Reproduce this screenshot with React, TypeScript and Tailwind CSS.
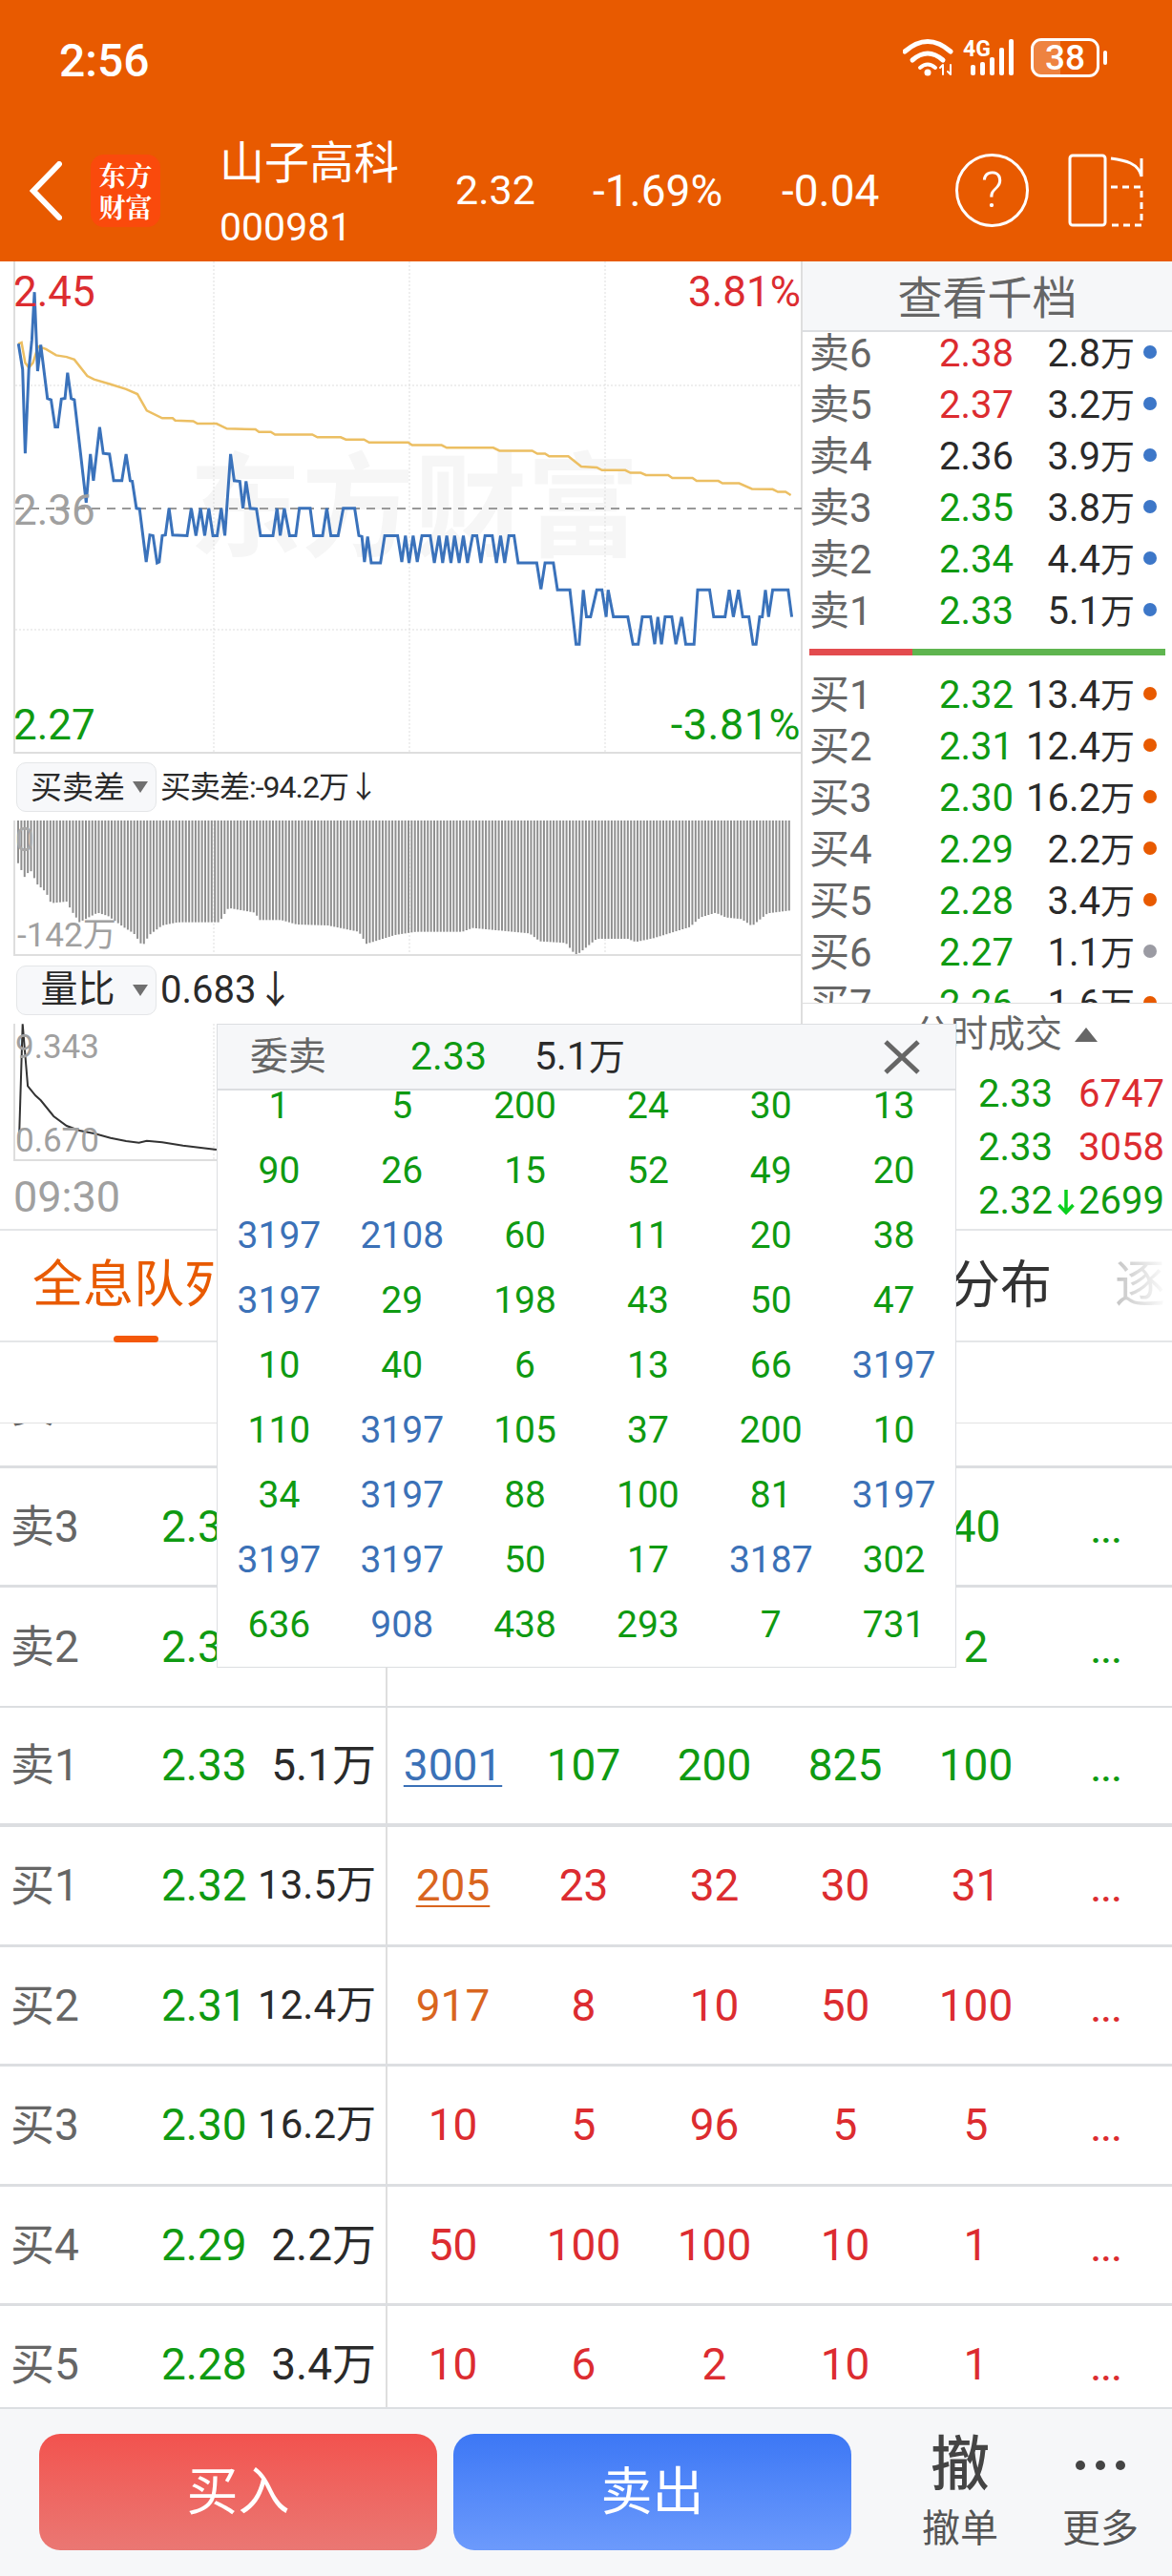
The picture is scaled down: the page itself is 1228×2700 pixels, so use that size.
import React from "react";

const GREEN = "text-[#0f9a12]";
const RED = "text-[#dc2c30]";
const BLUE = "text-[#3b71b7]";

type Pt = [number, number];

// chart points were read off the reference crops, so they get scaled back to px here
const pricePts: Pt[] = [
  [32,262],[40,340],[45,595],[52,340],[58,250],[63,105],[69,345],[75,265],[88,428],[95,432],[103,515],[108,515],[115,430],[122,428],[127,350],[134,428],[140,432],[152,595],[163,745],[171,597],[177,678],[189,515],[196,595],[208,597],[216,678],[232,678],[240,597],[248,678],[252,680],[260,762],[266,764],[279,925],[286,843],[292,845],[300,928],[304,925],[310,845],[316,843],[323,762],[330,843],[358,845],[366,762],[375,845],[384,762],[392,845],[400,762],[408,845],[416,845],[424,762],[431,845],[442,597],[449,678],[460,680],[466,762],[472,680],[480,762],[492,764],[500,845],[524,845],[532,762],[538,845],[546,762],[556,845],[568,845],[575,762],[596,762],[603,845],[620,845],[628,762],[636,845],[650,845],[660,762],[682,762],[690,845],[696,848],[701,925],[707,848],[714,928],[732,928],[740,845],[765,845],[773,925],[780,845],[787,928],[795,845],[803,925],[812,845],[828,845],[836,928],[845,845],[852,928],[860,845],[868,928],[875,845],[884,928],[892,845],[900,928],[910,845],[918,845],[926,928],[934,845],[948,845],[956,928],[964,845],[972,928],[980,845],[990,845],[998,928],[1034,928],[1042,1008],[1050,928],[1066,928],[1074,1010],[1098,1010],[1110,1175],[1116,1175],[1124,1010],[1130,1092],[1138,1092],[1150,1010],[1160,1010],[1168,1092],[1172,1010],[1182,1092],[1210,1092],[1220,1175],[1230,1175],[1238,1092],[1254,1092],[1262,1175],[1268,1092],[1275,1175],[1282,1092],[1295,1092],[1303,1175],[1314,1092],[1322,1175],[1338,1175],[1345,1010],[1368,1010],[1376,1092],[1398,1092],[1406,1010],[1414,1092],[1424,1010],[1432,1092],[1444,1092],[1452,1175],[1458,1175],[1465,1092],[1470,1092],[1476,1010],[1482,1092],[1490,1010],[1520,1010],[1527,1092],
];

const avgPts: Pt[] = [
  [32,262],[38,258],[45,320],[52,335],[60,320],[70,270],[85,278],[105,297],[125,302],[140,310],[165,360],[178,370],[210,385],[240,400],[262,415],[280,465],[310,488],[330,488],[335,495],[370,497],[378,505],[415,505],[435,520],[490,522],[497,530],[520,530],[528,538],[600,538],[610,546],[655,546],[665,553],[700,553],[710,562],[785,562],[793,570],[850,570],[860,578],[950,578],[962,587],[1025,587],[1035,596],[1050,596],[1058,604],[1095,604],[1120,635],[1150,638],[1160,646],[1205,646],[1215,654],[1235,654],[1245,661],[1288,661],[1296,670],[1335,670],[1343,679],[1385,679],[1393,686],[1425,686],[1450,703],[1490,704],[1500,712],[1515,712],[1525,722],
];

const depthPts: Pt[] = [
  [33,380],[44,418],[55,395],[68,440],[85,465],[95,500],[125,495],[135,525],[150,560],[185,530],[205,540],[235,575],[255,595],[272,635],[285,600],[310,570],[340,560],[420,560],[438,515],[490,530],[497,553],[540,553],[570,567],[630,570],[690,590],[705,628],[760,600],[800,590],[890,590],[910,578],[1020,595],[1040,620],[1090,625],[1110,665],[1150,612],[1210,612],[1225,622],[1260,610],[1330,575],[1350,545],[1380,530],[1400,545],[1430,550],[1450,572],[1480,532],[1528,522],
];

const ratioPts: Pt[] = [
  [33,1255],[40,880],[50,1075],[65,1105],[75,1120],[100,1170],[125,1200],[150,1215],[180,1225],[210,1238],[240,1248],[265,1253],[280,1247],[310,1252],[350,1262],[415,1275],
];

function toPoints(pts: Pt[], sy: number, oy: number) {
  return pts.map(([x, y]) => `${(x / 1.845 - 14).toFixed(1)},${(y / sy - oy).toFixed(1)}`).join(" ");
}

function depthAt(x: number) {
  for (let i = 1; i < depthPts.length; i++) {
    const [x0, y0] = depthPts[i - 1];
    const [x1, y1] = depthPts[i];
    if (x <= x1) return y0 + ((y1 - y0) * (x - x0)) / (x1 - x0);
  }
  return depthPts[depthPts.length - 1][1];
}

function GridLines({ h }: { h: number }) {
  return (
    <>
      {[208, 413, 618].map((x) => (
        <line key={x} x1={x} y1={0} x2={x} y2={h} stroke="#dddddd" strokeWidth="1" strokeDasharray="2 2" />
      ))}
    </>
  );
}

function MainChart() {
  return (
    <div className="relative h-[516px] border-b-2 border-l-2 border-[#dedede]">
      <div className="absolute left-[182px] top-[200px] flex text-[118px] leading-[120px] font-bold text-[#f6f6f6]">
        <span>东</span>
        <span>方</span>
        <span>财</span>
        <span>富</span>
      </div>
      <svg className="absolute left-0 top-0" width="824" height="514">
        <GridLines h={514} />
        <line x1="0" y1="130" x2="824" y2="130" stroke="#dddddd" strokeDasharray="2 2" />
        <line x1="0" y1="386" x2="824" y2="386" stroke="#dddddd" strokeDasharray="2 2" />
        <line x1="0" y1="259" x2="824" y2="259" stroke="#999" strokeWidth="2" strokeDasharray="9 7" />
        <polyline points={toPoints(avgPts, 2.9, 4)} fill="none" stroke="#ecbf63" strokeWidth="2.5" />
        <polyline points={toPoints(pricePts, 2.9, 4)} fill="none" stroke="#3a72bb" strokeWidth="3" />
      </svg>
      <div className={`absolute -left-[2px] top-[8px] text-[44px] leading-[48px] ${RED}`}>2.45</div>
      <div className={`absolute right-0 top-[8px] text-[44px] leading-[48px] ${RED}`}>3.81%</div>
      <div className="absolute -left-[2px] top-[237px] text-[44px] leading-[48px] text-[#a0a0a0]">2.36</div>
      <div className={`absolute bottom-[4px] -left-[2px] text-[44px] leading-[48px] ${GREEN}`}>2.27</div>
      <div className={`absolute bottom-[4px] right-0 text-[45px] leading-[48px] tracking-[0.5px] ${GREEN}`}>-3.81%</div>
    </div>
  );
}

function DepthChart() {
  const bars = Array.from({ length: 240 }, (_, i) => {
    const x = 3 + i * 3.38;
    const y = depthAt((x + 14) * 1.845) / 3 - 80;
    return { x, y };
  });
  return (
    <div className="relative h-[142px] border-b-2 border-l-2 border-[#dedede]">
      <svg className="absolute left-0 top-0" width="824" height="140">
        <GridLines h={140} />
        {bars.map((b) => (
          <line key={b.x} x1={b.x} y1={0} x2={b.x} y2={b.y} stroke="#8f8f8f" strokeWidth="2" />
        ))}
      </svg>
      <div className="absolute left-0 top-[2px] text-[35px] leading-[38px] text-[#a8a8a8]">0</div>
      <div className="absolute left-[2px] top-[102px] text-[35px] leading-[38px] text-[#a0a0a0]">-142万</div>
    </div>
  );
}

function RatioChart() {
  return (
    <div className="relative h-[144px] border-b-2 border-l-2 border-[#dedede]">
      <svg className="absolute left-0 top-0" width="824" height="142">
        <GridLines h={142} />
        <polyline points={toPoints(ratioPts, 3, 293)} fill="none" stroke="#333" strokeWidth="2" />
      </svg>
      <div className="absolute left-0 top-[6px] text-[35px] leading-[38px] text-[#a0a0a0]">9.343</div>
      <div className="absolute left-0 top-[104px] text-[35px] leading-[38px] text-[#a0a0a0]">0.670</div>
    </div>
  );
}

function Pill({ label, size }: { label: string; size: string }) {
  return (
    <div className="flex h-[52px] w-[147px] items-center justify-between rounded-[10px] border border-[#e4e6e8] bg-[#f7f8fa] pl-[9px] pr-[8px]">
      <span className={`flex-1 text-center leading-none text-[#2a2a2a] ${size}`}>{label}</span>
      <span className="ml-[3px] h-0 w-0 border-x-[8px] border-t-[12px] border-x-transparent border-t-[#707070]" />
    </div>
  );
}

const asks = [
  ["卖6", "2.38", "2.8", RED],
  ["卖5", "2.37", "3.2", RED],
  ["卖4", "2.36", "3.9", "text-[#2a2a2a]"],
  ["卖3", "2.35", "3.8", GREEN],
  ["卖2", "2.34", "4.4", GREEN],
  ["卖1", "2.33", "5.1", GREEN],
];

const bids = [
  ["买1", "2.32", "13.4", "bg-[#e85a00]"],
  ["买2", "2.31", "12.4", "bg-[#e85a00]"],
  ["买3", "2.30", "16.2", "bg-[#e85a00]"],
  ["买4", "2.29", "2.2", "bg-[#e85a00]"],
  ["买5", "2.28", "3.4", "bg-[#e85a00]"],
  ["买6", "2.27", "1.1", "bg-[#9b9ba3]"],
  ["买7", "2.26", "1.6", "bg-[#e85a00]"],
];

function BookRow({ label, price, vol, priceCls, dotCls }: { label: string; price: string; vol: string; priceCls: string; dotCls: string }) {
  return (
    <div className="flex h-[54px] items-center pl-[7px] text-[40px] leading-none">
      <span className="w-[136px] text-[42px] text-[#666]">{label}</span>
      <span className={`w-[78px] ${priceCls}`}>{price}</span>
      <span className="flex-1 text-right text-[#2a2a2a]">
        {vol}
        <span className="text-[36px]">万</span>
      </span>
      <span className="ml-[9px] mr-[16px] mb-[4px] flex h-[14px] w-[14px]">
        <span className={`h-full w-full rounded-full ${dotCls}`} />
      </span>
    </div>
  );
}

function OrderBook() {
  return (
    <div className="flex h-[1014px] w-[389px] flex-col border-l-2 border-[#dedede]">
      <div className="flex h-[74px] shrink-0 items-center justify-center border-b-2 border-[#dcdee1] bg-[#f6f7f9] pt-[4px] text-[47px] leading-none text-[#666]">
        查看千档
      </div>
      <div className="h-[704px] shrink-0 overflow-hidden border-b border-[#dedede]">
        <div className="-mt-[4px]">
          {asks.map((r) => (
            <BookRow key={r[0]} label={r[0]} price={r[1]} vol={r[2]} priceCls={r[3]} dotCls="bg-[#3d77c8]" />
          ))}
          <div className="mx-[7px] mb-[15px] mt-[12px] flex h-[7px]">
            <div className="w-[108px] bg-[#e34b4e]" />
            <div className="flex-1 bg-[#5fb54f]" />
          </div>
          {bids.map((r) => (
            <BookRow key={r[0]} label={r[0]} price={r[1]} vol={r[2]} priceCls={GREEN} dotCls={r[3]} />
          ))}
        </div>
      </div>
      <div className="flex h-[64px] shrink-0 items-center justify-end pr-[78px] text-[39px] text-[#666]">
        分时成交
        <span className="ml-[13px] h-0 w-0 border-x-[12px] border-b-[15px] border-x-transparent border-b-[#666]" />
      </div>
      <div className="pl-[184px] pr-[8px] pt-[3px] text-[40px] leading-none">
        <div className="flex h-[56px] items-center justify-between">
          <span className={GREEN}>2.33</span>
          <span className={RED}>6747</span>
        </div>
        <div className="flex h-[56px] items-center justify-between">
          <span className={GREEN}>2.33</span>
          <span className={RED}>3058</span>
        </div>
        <div className="flex h-[56px] items-center justify-between">
          <span className={GREEN}>2.32</span>
          <svg width="18" height="30" viewBox="0 0 18 30" fill="none" stroke="#0ad01e" strokeWidth="3.5">
            <path d="M9 3V27M1.5 19L9 27L16.5 19" />
          </svg>
          <span className={GREEN}>2699</span>
        </div>
      </div>
    </div>
  );
}

const popupRows = [
  [1, 5, 200, 24, 30, 13],
  [90, 26, 15, 52, 49, 20],
  [3197, 2108, 60, 11, 20, 38],
  [3197, 29, 198, 43, 50, 47],
  [10, 40, 6, 13, 66, 3197],
  [110, 3197, 105, 37, 200, 10],
  [34, 3197, 88, 100, 81, 3197],
  [3197, 3197, 50, 17, 3187, 302],
  [636, 908, 438, 293, 7, 731],
];
const popupBlue = [3197, 2108, 3187, 908];

function QueuePopup() {
  return (
    <div className="absolute left-[227px] top-[1073px] h-[675px] w-[775px] overflow-hidden border border-[#dcdee1] bg-white">
      <div className="relative z-10 flex h-[69px] items-center border-b-2 border-[#dcdee1] bg-[#f6f7f9] pl-[34px] text-[41px]">
        <span className="w-[168px] text-[40px] text-[#666]">委卖</span>
        <span className={`w-[130px] ${GREEN}`}>2.33</span>
        <span className="flex-1 text-[#2a2a2a]">
          5.1<span className="text-[38px]">万</span>
        </span>
        <svg className="mr-[37px]" width="38" height="36" viewBox="0 0 38 36" fill="none" stroke="#666" strokeWidth="5">
          <path d="M2 2L36 34M36 2L2 34" />
        </svg>
      </div>
      <div className="-mt-[18px] grid grid-cols-6">
        {popupRows.flat().map((v, i) => (
          <div key={i} className={`flex h-[68px] items-center justify-center text-[39px] ${popupBlue.includes(v) ? BLUE : GREEN}`}>
            {v}
          </div>
        ))}
      </div>
    </div>
  );
}

type TableRow = {
  label: string;
  price: string;
  vol: string;
  volSize: string;
  cells: (string | number)[];
  side: string;
  line: string;
  firstCls?: string;
};

const tableRows: TableRow[] = [
  { label: "卖4", price: "", vol: "", volSize: "text-[46px]", cells: ["", "", "", "", "", ""], side: GREEN, line: "border-b-[3px]" },
  { label: "卖3", price: "2.35", vol: "", volSize: "text-[46px]", cells: ["", "", "", "", 40, "..."], side: GREEN, line: "border-b-[3px]" },
  { label: "卖2", price: "2.34", vol: "", volSize: "text-[46px]", cells: ["", "", "", "", 2, "..."], side: GREEN, line: "border-b-2" },
  { label: "卖1", price: "2.33", vol: "5.1", volSize: "text-[46px]", cells: [3001, 107, 200, 825, 100, "..."], side: GREEN, line: "border-b-4", firstCls: `underline underline-offset-[5px] decoration-2 ${BLUE}` },
  { label: "买1", price: "2.32", vol: "13.5", volSize: "text-[42px]", cells: [205, 23, 32, 30, 31, "..."], side: RED, line: "border-b-[3px]", firstCls: "underline underline-offset-[5px] decoration-2 text-[#d9651f]" },
  { label: "买2", price: "2.31", vol: "12.4", volSize: "text-[42px]", cells: [917, 8, 10, 50, 100, "..."], side: RED, line: "border-b-[3px]", firstCls: "text-[#d9651f]" },
  { label: "买3", price: "2.30", vol: "16.2", volSize: "text-[42px]", cells: [10, 5, 96, 5, 5, "..."], side: RED, line: "border-b-[3px]" },
  { label: "买4", price: "2.29", vol: "2.2", volSize: "text-[46px]", cells: [50, 100, 100, 10, 1, "..."], side: RED, line: "border-b-[3px]" },
  { label: "买5", price: "2.28", vol: "3.4", volSize: "text-[46px]", cells: [10, 6, 2, 10, 1, "..."], side: RED, line: "border-b-[3px]" },
];

function Table() {
  return (
    <div className="flex-1 overflow-hidden">
      <div className="-mt-[79px]">
        {tableRows.map((r) => (
          <div key={r.label} className={`flex h-[125.5px] items-stretch border-[#dcdee1] ${r.line}`}>
            <div className="flex w-[406px] shrink-0 items-center border-r-2 border-[#dedede] pl-[11px] pr-[10px] leading-none">
              <span className="w-[158px] text-[46px] text-[#666]">{r.label}</span>
              <span className={`w-[89px] text-[46px] ${GREEN}`}>{r.price}</span>
              <span className={`flex-1 whitespace-nowrap text-right text-[#2a2a2a] ${r.volSize}`}>{r.vol && `${r.vol}万`}</span>
            </div>
            <div className="grid flex-1 grid-cols-6 items-center">
              {r.cells.map((c, i) => (
                <div key={i} className={`text-center leading-none ${i === 0 && r.firstCls ? r.firstCls : r.side} ${c === "..." ? "pt-[10px] text-[34px] font-bold tracking-[1px]" : "text-[46px]"}`}>
                  {c}
                </div>
              ))}
            </div>
          </div>
        ))}
      </div>
    </div>
  );
}

function StatusIcons() {
  return (
    <div className="flex items-center pr-[68px] pb-[5px]">
      <svg width="56" height="40" viewBox="0 0 56 40" fill="none" stroke="white" strokeLinecap="round">
        <path d="M2 14Q26 -7 50 14" strokeWidth="5" />
        <path d="M10 23Q26 9 42 23" strokeWidth="5" />
        <path d="M18 31Q26 24 34 31" strokeWidth="4" />
        <circle cx="26" cy="36" r="3.5" fill="white" stroke="none" />
        <path d="M42 28V38M39 31L42 28M50 28V38M47 35L50 38" strokeWidth="2" />
      </svg>
      <svg className="ml-[7px]" width="56" height="40" viewBox="0 0 56 40" fill="white">
        <text x="0" y="19" fontSize="23" fontWeight="700" fill="white" fontFamily="Roboto">4G</text>
        <rect x="8" y="28" width="5" height="11" rx="2" />
        <rect x="18" y="25" width="5" height="14" rx="2" />
        <rect x="28" y="20" width="5" height="19" rx="2" />
        <rect x="38" y="10" width="5" height="29" rx="2" />
        <rect x="48" y="1" width="5" height="38" rx="2" />
      </svg>
      <div className="relative ml-[15px] flex h-[41px] w-[72px] items-center justify-center overflow-hidden rounded-[11px] border-[3px] border-white text-[37px] font-medium leading-none text-white">
        <div className="absolute bottom-0 left-0 top-0 w-[28px] bg-white/25" />
        <span className="relative">38</span>
      </div>
      <div className="ml-[4px] h-[15px] w-[4px] rounded-full bg-white" />
    </div>
  );
}

function Header() {
  return (
    <div className="h-[274px] shrink-0 bg-[#e85a00] text-white">
      <div className="flex h-[125px] items-center justify-between pl-[62px]">
        <span className="pt-[2px] text-[48px] font-medium leading-none">2:56</span>
        <StatusIcons />
      </div>
      <div className="flex h-[149px] items-center">
        <svg className="ml-[31px]" width="34" height="62" viewBox="0 0 34 62" fill="none" stroke="white" strokeWidth="6" strokeLinecap="round">
          <path d="M31 3L4 31L31 59" />
        </svg>
        <div className="ml-[30px] flex h-[76px] w-[73px] flex-col items-center justify-center rounded-[14px] bg-[#fa4a0c] font-['Noto_Serif_CJK_SC','Noto_Sans_CJK_SC',serif] text-[28px] font-bold leading-[33px]">
          <span>东方</span>
          <span>财富</span>
        </div>
        <div className="ml-[62px] w-[247px] self-start pt-[21px]">
          <div className="h-[50px] text-[47px] leading-[50px]">山子高科</div>
          <div className="mt-[20px] text-[41px] leading-[44px]">000981</div>
        </div>
        <div className="w-[144px] text-[43px] leading-none">2.32</div>
        <div className="w-[198px] text-[46px] leading-none">-1.69%</div>
        <div className="w-[182px] text-[46px] leading-none">-0.04</div>
        <div className="flex h-[77px] w-[77px] items-center justify-center rounded-full border-[3px] border-white text-[52px] font-light leading-none">?</div>
        <svg className="ml-[41px]" width="80" height="78" viewBox="0 0 80 78" fill="none" stroke="white" strokeWidth="3">
          <rect x="2" y="2" width="37" height="73" rx="3" />
          <path d="M45 5C60 7 74 10 77 24V5" />
          <path d="M45 35H77V75H45" strokeDasharray="7 5" />
        </svg>
      </div>
    </div>
  );
}

function BottomBar() {
  return (
    <div className="flex h-[177px] shrink-0 items-start border-t-2 border-[#dcdee1] bg-[#f6f7f9] pl-[41px] pt-[26px]">
      <button className="flex h-[122px] w-[417px] items-center justify-center rounded-[22px] bg-gradient-to-b from-[#f2524e] to-[#ea7773] text-[54px] text-white">
        买入
      </button>
      <button className="ml-[17px] flex h-[122px] w-[417px] items-center justify-center rounded-[22px] bg-gradient-to-b from-[#3c77f5] to-[#6c9afc] text-[54px] text-white">
        卖出
      </button>
      <div className="ml-[74px] flex w-[80px] flex-col items-center text-[#555]">
        <span className="h-[66px] text-[62px] font-medium leading-[66px] text-[#444]">撤</span>
        <span className="mt-[12px] text-[40px] leading-[44px]">撤单</span>
      </div>
      <div className="ml-[67px] flex w-[80px] flex-col items-center text-[#555]">
        <div className="flex h-[66px] items-center gap-[11px]">
          <span className="h-[10px] w-[10px] rounded-full bg-[#444]" />
          <span className="h-[10px] w-[10px] rounded-full bg-[#444]" />
          <span className="h-[10px] w-[10px] rounded-full bg-[#444]" />
        </div>
        <span className="mt-[12px] text-[40px] leading-[44px]">更多</span>
      </div>
    </div>
  );
}

export default function App() {
  return (
    <div className="relative flex h-[2700px] w-[1228px] flex-col overflow-hidden bg-white font-[Roboto,'Noto_Sans_CJK_SC',sans-serif]">
      <Header />
      <div className="flex h-[1014px] shrink-0">
        <div className="w-[839px] shrink-0 pl-[14px]">
          <MainChart />
          <div className="flex h-[70px] items-center gap-[4px] pl-[3px]">
            <Pill label="买卖差" size="text-[33px]" />
            <span className="text-[32px] leading-none tracking-[-1px] text-[#2a2a2a]">买卖差:-94.2万↓</span>
          </div>
          <DepthChart />
          <div className="flex h-[71px] items-center gap-[4px] pl-[3px]">
            <Pill label="量比" size="text-[39px]" />
            <span className="text-[40px] leading-none text-[#2a2a2a]">0.683↓</span>
          </div>
          <RatioChart />
          <div className="flex h-[70px] items-center pt-[4px] text-[45px] leading-none text-[#a0a0a0]">09:30</div>
        </div>
        <OrderBook />
      </div>
      <div className="flex h-[119px] shrink-0 items-center border-y-2 border-[#e4e6e8] text-[53px] leading-none">
        <div className="relative ml-[34px] flex h-full items-center text-[#e85a00]">
          全息队列
          <span className="absolute -bottom-[2px] left-[85px] h-[7px] w-[47px] rounded-full bg-[#f4580a]" />
        </div>
        <span className="ml-[748px] text-[54px] text-[#333]">分布</span>
        <span className="ml-[66px] w-[56px] bg-gradient-to-r from-[#c4c4c4] to-white bg-clip-text text-transparent">逐</span>
      </div>
      <div className="h-[85px] shrink-0 border-b border-[#e2e2e2]" />
      <Table />
      <BottomBar />
      <QueuePopup />
    </div>
  );
}
